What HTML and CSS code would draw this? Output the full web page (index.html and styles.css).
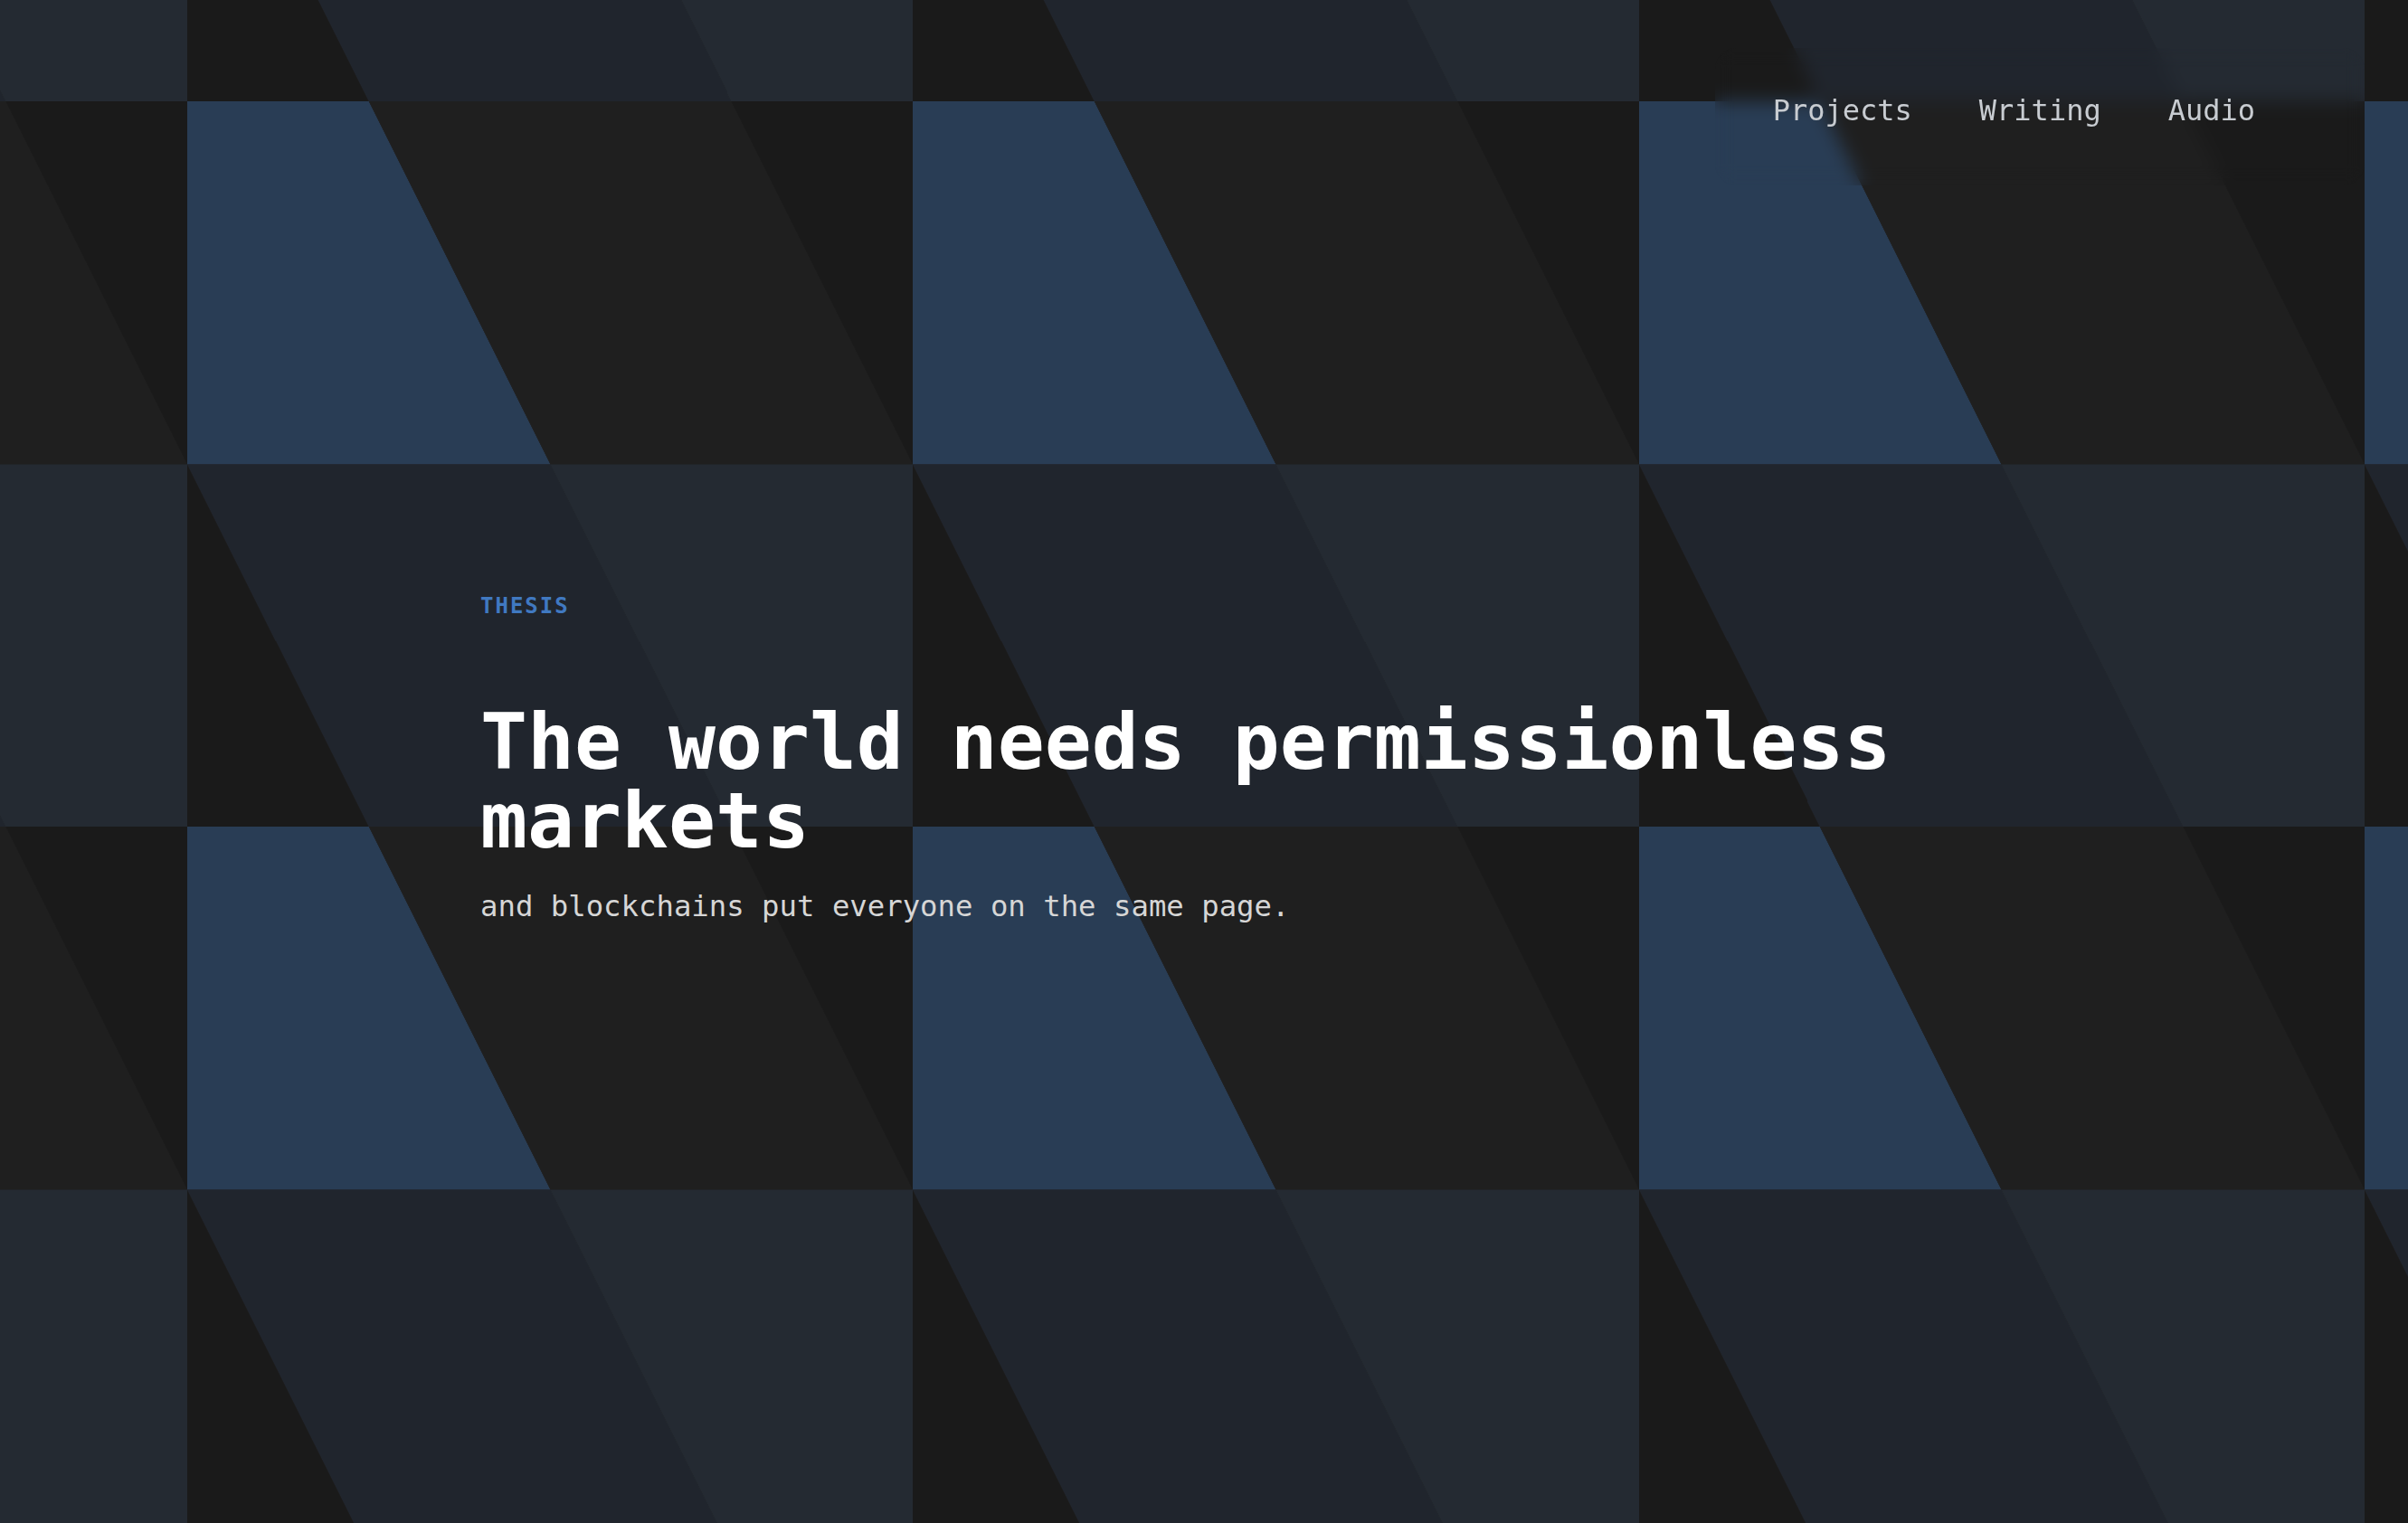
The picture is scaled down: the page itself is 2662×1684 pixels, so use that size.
FILE: index.html
```html
<!DOCTYPE html>
<html lang="en">
<head>
<meta charset="utf-8">
<title>Thesis</title>
<link rel="stylesheet" href="styles.css">
</head>
<body class="page">
  <header class="site-header">
    <nav class="nav-panel">
      <a class="nav-link" href="#">Projects</a>
      <a class="nav-link" href="#">Writing</a>
      <a class="nav-link" href="#">Audio</a>
    </nav>
  </header>
  <main class="hero">
    <p class="eyebrow">THESIS</p>
    <h1 class="headline">The world needs permissionless markets</h1>
    <p class="lede">and blockchains put everyone on the same page.</p>
  </main>
</body>
</html>
```
FILE: styles.css
```css
html, body {
  margin: 0;
  padding: 0;
}

.page {
  min-height: 100vh;
  background-color: #1a1a1a;
  background-image: url("data:image/svg+xml,%3Csvg xmlns='http://www.w3.org/2000/svg' viewBox='0 0 400 400' preserveAspectRatio='none'%3E%3Cpath fill='%23293d55' d='M0 0H100L200 200H0Z'/%3E%3Cpath fill='%231f1f1f' d='M100 0H300L400 200H200Z'/%3E%3Cpath fill='%231a1a1a' d='M300 0H400V200Z'/%3E%3Cpath fill='%231a1a1a' d='M0 200L100 400H0Z'/%3E%3Cpath fill='%2320252d' d='M0 200H200L300 400H100Z'/%3E%3Cpath fill='%23242a32' d='M200 200H400V400H300Z'/%3E%3C/svg%3E");
  background-size: 802.33px 802.33px;
  background-position: 207px 112px;
  background-repeat: repeat;
  font-family: "DejaVu Sans Mono", "Liberation Mono", monospace;
  color: #d4d4d4;
  overflow: hidden;
}

.site-header {
  display: flex;
  justify-content: flex-end;
  padding: 53px 48px 0 0;
}

.nav-panel {
  display: flex;
  align-items: flex-start;
  gap: 74px;
  box-sizing: border-box;
  height: 152px;
  padding: 51px 121px 0 64px;
  border-radius: 24px;
  -webkit-backdrop-filter: blur(10px);
  backdrop-filter: blur(10px);
}

.nav-link {
  font-size: 32px;
  line-height: 37px;
  color: #c8ccd1;
  text-decoration: none;
}

.hero {
  max-width: 1600px;
  margin: 451px auto 0;
}

.eyebrow {
  margin: 0;
  font-size: 24px;
  line-height: 29px;
  font-weight: 700;
  letter-spacing: 2px;
  color: #4079c1;
}

.headline {
  margin: 92px 0 0;
  font-size: 86.35px;
  line-height: 86.5px;
  font-weight: 700;
  color: #ffffff;
}

.lede {
  margin: 28px 0 0;
  font-size: 32.3px;
  line-height: 48px;
  color: #d6d6d6;
}
```
